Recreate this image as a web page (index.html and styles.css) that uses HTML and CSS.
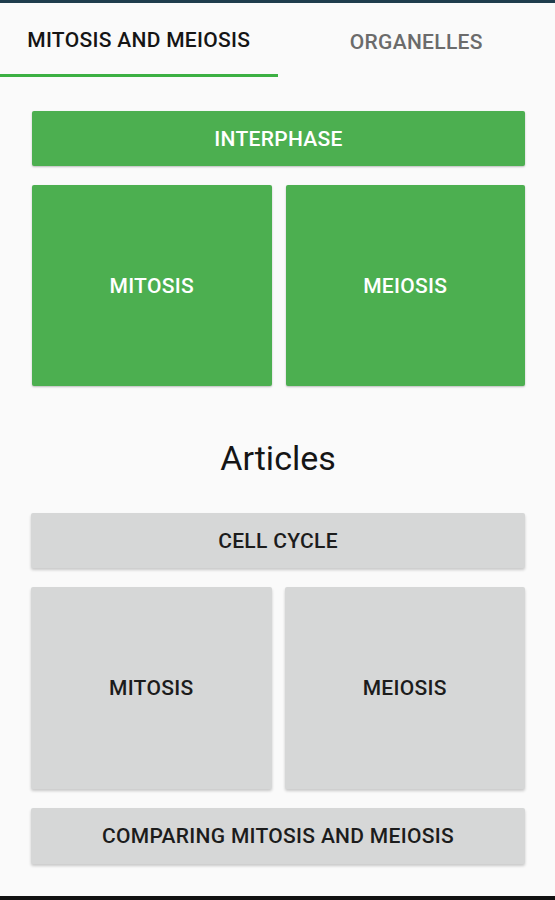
FILE: index.html
```html
<!DOCTYPE html>
<html lang="en">
<head>
    <meta charset="UTF-8">
    <meta name="viewport" content="width=device-width, initial-scale=1.0">
    <title>Mitosis and Meiosis</title>
    <link rel="stylesheet" href="styles.css">
</head>
<body>
    <div class="screen">
        <div class="status-line"></div>

        <!-- Tabs -->
        <div class="tabs">
            <div class="tab tab-active">MITOSIS AND MEIOSIS</div>
            <div class="tab">ORGANELLES</div>
        </div>

        <div class="content">
            <div class="btn btn-green btn-wide">INTERPHASE</div>
            <div class="pair">
                <div class="btn btn-green btn-tall">MITOSIS</div>
                <div class="btn btn-green btn-tall">MEIOSIS</div>
            </div>

            <h2 class="section-title">Articles</h2>

            <div class="btn btn-grey btn-wide">CELL CYCLE</div>
            <div class="pair">
                <div class="btn btn-grey btn-tall btn-grey-tall">MITOSIS</div>
                <div class="btn btn-grey btn-tall btn-grey-tall">MEIOSIS</div>
            </div>
            <div class="btn btn-grey btn-wide btn-last">COMPARING MITOSIS AND MEIOSIS</div>
        </div>

        <div class="nav-line"></div>
    </div>
</body>
</html>
```

FILE: styles.css
```css
body {
    margin: 0;
    background-color: #fafafa;
    font-family: Roboto, "Noto Sans", Arial, sans-serif;
}

.screen {
    height: 900px;
    display: flex;
    flex-direction: column;
    overflow: hidden;
}

.status-line {
    height: 3px;
    background-color: #1f3d4d;
}

.tabs {
    display: flex;
    height: 74px;
}

.tab {
    flex: 1;
    display: flex;
    align-items: center;
    justify-content: center;
    font-size: 21px;
    font-weight: 500;
    letter-spacing: 0.3px;
    color: #6b6b6b;
    box-sizing: border-box;
    padding-top: 3px;
}

.tab-active {
    color: #151515;
    border-bottom: 3px solid #3cb043;
}

.content {
    flex: 1;
    display: flex;
    flex-direction: column;
    gap: 19px;
    padding: 34px 30px 0 31px;
}

.pair {
    display: grid;
    grid-template-columns: 1fr 1fr;
    gap: 13px;
}

.btn {
    display: flex;
    align-items: center;
    justify-content: center;
    border-radius: 2px;
    font-size: 21px;
    font-weight: 500;
    letter-spacing: 0.3px;
}

.btn-green {
    background-color: #4caf50;
    color: #fff;
    box-shadow: 0 1px 2px rgba(0, 0, 0, 0.25);
    margin-left: 1px;
}

.btn-grey {
    background-color: #d6d7d7;
    color: #1c1c1c;
    box-shadow: 0 2px 3px rgba(0, 0, 0, 0.2);
}

.btn-wide {
    height: 55px;
}

.btn-tall {
    height: 201px;
}

.btn-grey-tall {
    height: 202px;
}

.btn-last {
    height: 56px;
}

.section-title {
    margin: 33px 0 16px;
    text-align: center;
    font-size: 34px;
    font-weight: 400;
    line-height: 40px;
    color: #151515;
}

.nav-line {
    height: 4px;
    background-color: #111;
}
```
